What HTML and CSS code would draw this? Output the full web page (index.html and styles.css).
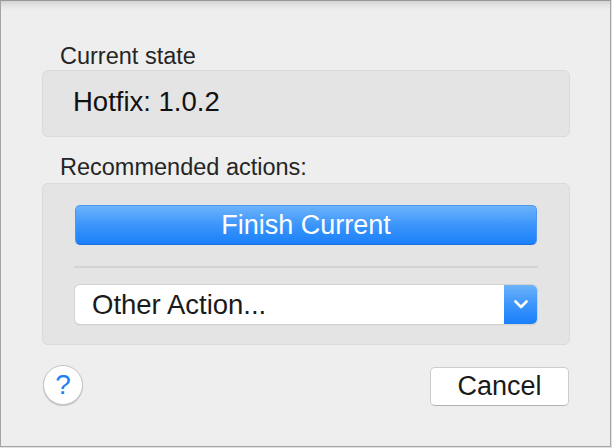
FILE: index.html
```html
<!DOCTYPE html>
<html lang="en">
<head>
    <meta charset="UTF-8">
    <meta name="viewport" content="width=device-width, initial-scale=1.0">
    <title>Hotfix</title>
    <link rel="stylesheet" href="styles.css">
</head>
<body>
    <div class="sheet">
        <div class="label">Current state</div>
        <div class="group state-box">Hotfix: 1.0.2</div>

        <div class="label label-actions">Recommended actions:</div>
        <div class="group actions-box">
            <button class="btn-primary">Finish Current</button>
            <div class="divider"></div>
            <div class="popup">
                <span class="popup-text">Other Action...</span>
                <span class="popup-arrow">
                    <svg width="14" height="9" viewBox="0 0 14 9">
                        <path d="M1.5 1.5 L7 7 L12.5 1.5" fill="none" stroke="#fff" stroke-width="2.6" stroke-linecap="round" stroke-linejoin="round"/>
                    </svg>
                </span>
            </div>
        </div>

        <div class="footer">
            <button class="btn-help">?</button>
            <button class="btn-cancel">Cancel</button>
        </div>
    </div>
</body>
</html>
```

FILE: styles.css
```css
body {
    margin: 0;
    background: #e2e2e2;
    font-family: "Liberation Sans", Arial, sans-serif;
}
.sheet {
    box-sizing: border-box;
    width: 611px;
    height: 447px;
    padding: 41px 40px 0 41px;
    border: 1px solid #a4a4a4;
    border-top-color: #979797;
    background: linear-gradient(#d4d4d4, #e6e6e6 5px, #eeeeee 10px, #eeeeee);
}
.label {
    font-size: 23.5px;
    line-height: 28px;
    color: #252525;
    padding-left: 18px;
}
.label-actions {
    margin-top: 16px;
    margin-bottom: 2px;
}
.group {
    background: #e4e4e4;
    border: 1px solid #dadada;
    border-radius: 6px;
}
.state-box {
    height: 51px;
    padding: 14px 0 0 30px;
    font-size: 27.5px;
    line-height: 34px;
    color: #111;
}
.actions-box {
    padding: 21px 32px 20px 32px;
}
.btn-primary {
    display: block;
    width: 100%;
    height: 40px;
    padding: 0;
    border: 1px solid #4d97f2;
    border-bottom-color: #1a6fe0;
    border-radius: 5px;
    background: linear-gradient(#6cb3fa, #3c95fa 50%, #1a80fa);
    color: #fff;
    font-family: inherit;
    font-size: 27px;
    line-height: 38px;
}
.divider {
    height: 2px;
    margin: 21px -1px 17px -1px;
    background: #d3d3d3;
}
.popup {
    display: flex;
    height: 39px;
    border-radius: 5px;
    background: #fff;
    box-shadow: 0 0 0 1px #d2d2d2, 0 1px 1px #b2b2b2;
    overflow: hidden;
}
.popup-text {
    flex: 1;
    padding-left: 17px;
    font-size: 27.5px;
    line-height: 39px;
    color: #1a1a1a;
}
.popup-arrow {
    width: 33px;
    display: flex;
    align-items: center;
    justify-content: center;
    background: linear-gradient(#6cb3fa, #3c95fa 50%, #1a80fa);
}
.footer {
    display: flex;
    justify-content: space-between;
    align-items: flex-start;
    margin-top: 20px;
    padding-left: 1px;
}
.btn-help {
    width: 40px;
    height: 40px;
    padding: 0;
    border: 1px solid #c4c4c4;
    border-radius: 50%;
    background: #fff;
    box-shadow: 0 1px 1px rgba(0, 0, 0, 0.18);
    color: #1b7ff6;
    font-family: inherit;
    font-size: 28px;
    line-height: 38px;
}
.btn-cancel {
    width: 139px;
    height: 39px;
    margin-top: 2px;
    margin-right: 1px;
    padding: 0;
    border: 1px solid #cdcdcd;
    border-bottom-color: #b0b0b0;
    border-radius: 5px;
    background: #fff;
    color: #1a1a1a;
    font-family: inherit;
    font-size: 27px;
    line-height: 37px;
}
```
